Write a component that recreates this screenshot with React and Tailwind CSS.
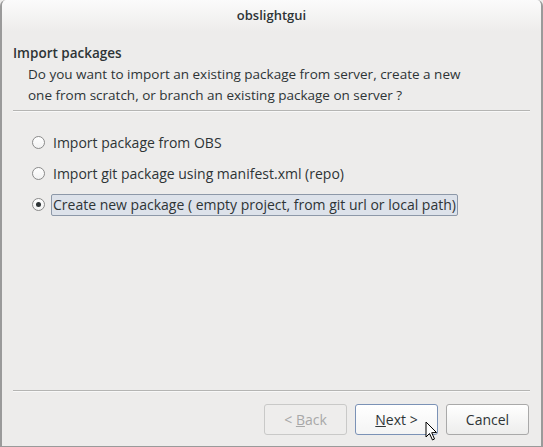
import React from "react";

function Radio({ checked }) {
  return (
    <span className="relative inline-block w-[13px] h-[13px] rounded-full border border-[#8a8a8a] bg-gradient-to-b from-[#ffffff] to-[#f2f2f2] shrink-0">
      {checked && (
        <span className="absolute left-[3px] top-[3px] w-[5px] h-[5px] rounded-full bg-[#2e3436]" />
      )}
    </span>
  );
}

export default function App() {
  const font = { fontFamily: '"Open Sans", "DejaVu Sans", sans-serif' };
  return (
    <div className="w-[543px] h-[447px] bg-[#edeceb] text-[#2e3436]" style={font}>
      <div className="w-[543px] h-[447px] flex flex-col border-l-2 border-r-2 border-b border-[#9a9a9a] rounded-tl-[6px] rounded-tr-[6px] overflow-hidden">
        <div className="h-[32px] bg-gradient-to-b from-[#fbfbfb] to-[#edeceb] flex items-center justify-center text-[13px] font-semibold text-[#2e3436]">
          obslightgui
        </div>
        <div className="flex-1 flex flex-col px-[11px]">
          <div className="text-[13.5px] font-semibold leading-[18px] mt-[12px]">Import packages</div>
          <div className="pl-[15px] text-[13.5px] leading-[21px] mt-[2px]">
            Do you want to import an existing package from server, create a new
            <br />
            one from scratch, or branch an existing package on server ?
          </div>
          <div className="mt-[4px] h-[2px] border-t border-[#b5b5b3] border-b border-b-[#f8f8f8] w-[517px]" />
          <div className="flex flex-col pl-[19px] mt-[20px] gap-[10px] text-[14px]">
            <div className="flex items-center gap-[6px] h-[21px]">
              <Radio />
              <span className="px-[2px]">Import package from OBS</span>
            </div>
            <div className="flex items-center gap-[6px] h-[21px]">
              <Radio />
              <span className="px-[2px]">Import git package using manifest.xml (repo)</span>
            </div>
            <div className="flex items-center gap-[6px] h-[21px]">
              <Radio checked />
              <span className="px-[1px] h-[22px] leading-[20px] border border-[#8d98a8] rounded-[2px] bg-[#dde2ea]">
                Create new package ( empty project, from git url or local path)
              </span>
            </div>
          </div>
          <div className="flex-1" />
          <div className="h-[2px] border-t border-[#b5b5b3] border-b border-b-[#f8f8f8] w-[517px]" />
          <div className="flex justify-end gap-[8px] mt-[12px] mb-[11px] pr-[1px] text-[14px]">
            <button className="w-[83px] h-[31px] rounded-[3px] border border-[#c9c9c8] bg-[#eeedec] text-[#a8a8a8]">
              &lt; <span className="underline">B</span>ack
            </button>
            <div className="relative">
              <button className="w-[83px] h-[31px] rounded-[3px] border border-[#7b92b6] bg-gradient-to-b from-[#ffffff] to-[#f4f4f4] text-[#2e3436]">
                <span className="underline">N</span>ext &gt;
              </button>
              <svg className="absolute left-[70px] top-[17px]" width="14" height="21" viewBox="0 0 14 21">
                <path d="M1 1 L1 16 L4.5 12.5 L7.5 19 L9.5 18 L6.7 11.7 L11.5 11.5 Z" fill="#ffffff" stroke="#000000" strokeWidth="1" strokeLinejoin="round" />
              </svg>
            </div>
            <button className="w-[83px] h-[31px] rounded-[3px] border border-[#a9a9a9] bg-gradient-to-b from-[#ffffff] to-[#ededec] text-[#2e3436]">
              Cancel
            </button>
          </div>
        </div>
      </div>
    </div>
  );
}
